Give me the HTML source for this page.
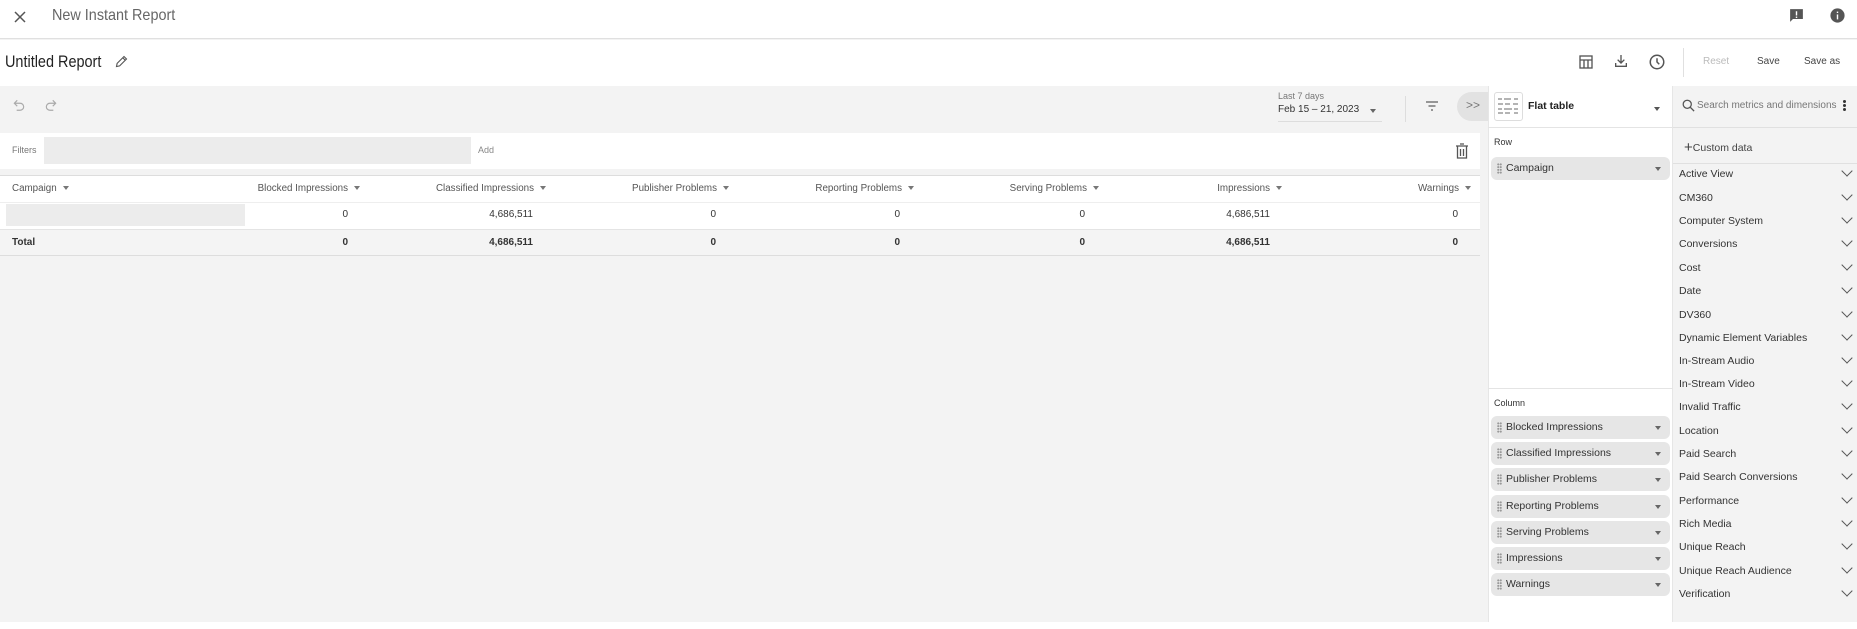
<!DOCTYPE html>
<html><head><meta charset="utf-8"><style>
*{box-sizing:border-box;margin:0;padding:0}
body{width:1857px;height:629px;overflow:hidden;font-family:"Liberation Sans",sans-serif;background:#f3f3f3;color:#222;position:relative}
.a{position:absolute}
.t{position:absolute;white-space:nowrap}
.chip{position:absolute;left:1491px;width:179px;height:23px;background:#e6e6e6;border-radius:6px;font-size:10.5px;color:#333}
.chip .d{position:absolute;left:6px;top:6px;width:5px;height:11px;background:radial-gradient(circle,#999 0.9px,transparent 1.2px) 0 0/2.5px 2.75px}
.chip span{position:absolute;left:15px;top:5px}
.chip i{position:absolute;right:9px;top:10px;border:3.5px solid transparent;border-top:4px solid #666}
.li{position:absolute;left:1679px;font-size:10.5px;color:#333}
.cv{position:absolute;left:1843px;width:8px;height:8px;border-right:1.3px solid #555;border-bottom:1.3px solid #555;transform:rotate(45deg)}
.hd{position:absolute;top:183px;font-size:9.8px;color:#555;text-align:right;white-space:nowrap}
.hd i{display:inline-block;margin-left:6px;vertical-align:middle;border:3.5px solid transparent;border-top:4px solid #777;margin-top:3px}
.v{position:absolute;font-size:10px;color:#333;text-align:right;white-space:nowrap}
</style></head><body>
<div class="a" style="left:0;top:0;width:1857px;height:39px;background:#fff;border-bottom:1px solid #e0e0e0"></div>
<svg class="a" style="left:12px;top:9px" width="16" height="16" viewBox="0 0 16 16"><path d="M3 3L13 13M13 3L3 13" stroke="#555" stroke-width="1.5"/></svg>
<div class="t" style="left:52px;top:7px;font-size:16px;color:#666;transform:scaleX(0.9);transform-origin:left">New Instant Report</div>
<svg class="a" style="left:1788px;top:7px" width="17" height="17" viewBox="0 0 24 24"><path d="M3 3h18v14H7l-4 4z" fill="#555"/><rect x="11" y="6" width="2" height="6" fill="#fff"/><rect x="11" y="13.5" width="2" height="2" fill="#fff"/></svg>
<svg class="a" style="left:1829px;top:7px" width="17" height="17" viewBox="0 0 24 24"><circle cx="12" cy="12" r="10" fill="#555"/><rect x="11" y="10.5" width="2" height="7" fill="#fff"/><rect x="11" y="6.5" width="2" height="2" fill="#fff"/></svg>
<div class="a" style="left:0;top:40px;width:1857px;height:46px;background:#fff"></div>
<div class="t" style="left:5px;top:52px;font-size:17px;color:#222;transform:scaleX(0.85);transform-origin:left">Untitled Report</div>
<svg class="a" style="left:114px;top:54px" width="15" height="15" viewBox="0 0 24 24"><path d="M4 20l1-5L16 4l4 4L9 19zM14 6l4 4" fill="none" stroke="#555" stroke-width="1.8"/></svg>
<svg class="a" style="left:1578px;top:54px" width="16" height="16" viewBox="0 0 24 24"><rect x="3" y="3" width="18" height="18" fill="none" stroke="#555" stroke-width="2"/><path d="M3 9h18M9 9v12M15 9v12" stroke="#555" stroke-width="2"/></svg>
<svg class="a" style="left:1613px;top:53px" width="16" height="16" viewBox="0 0 24 24"><path d="M12 3v12M7 10l5 5 5-5M4 15v5h16v-5" fill="none" stroke="#555" stroke-width="2"/></svg>
<svg class="a" style="left:1648px;top:53px" width="18" height="18" viewBox="0 0 24 24"><circle cx="12" cy="12" r="9" fill="none" stroke="#555" stroke-width="2"/><path d="M12 7v5l3 3" fill="none" stroke="#555" stroke-width="2"/></svg>
<div class="a" style="left:1683px;top:48px;width:1px;height:29px;background:#e0e0e0"></div>
<div class="t" style="left:1703px;top:56px;font-size:10px;color:#bbb">Reset</div>
<div class="t" style="left:1757px;top:56px;font-size:10px;color:#444">Save</div>
<div class="t" style="left:1804px;top:56px;font-size:10px;color:#444">Save as</div>
<svg class="a" style="left:12px;top:98px" width="14" height="14" viewBox="0 0 24 24"><path d="M9 4L4 9l5 5M4 9h10a6 6 0 010 12H8" fill="none" stroke="#aaa" stroke-width="2"/></svg>
<svg class="a" style="left:44px;top:98px" width="14" height="14" viewBox="0 0 24 24"><path d="M15 4l5 5-5 5M20 9H10a6 6 0 000 12h6" fill="none" stroke="#aaa" stroke-width="2"/></svg>
<div class="t" style="left:1278px;top:91px;font-size:9px;color:#777">Last 7 days</div>
<div class="t" style="left:1278px;top:104px;font-size:10px;color:#333">Feb 15 – 21, 2023</div>
<div class="a" style="left:1370px;top:109px;border:3.5px solid transparent;border-top:4px solid #666"></div>
<div class="a" style="left:1278px;top:121px;width:104px;height:1px;background:#ddd"></div>
<div class="a" style="left:1405px;top:96px;width:1px;height:26px;background:#ddd"></div>
<svg class="a" style="left:1424px;top:100px" width="16" height="12" viewBox="0 0 16 12"><path d="M2 2h12M4.5 6h7M7 10h2" stroke="#777" stroke-width="1.4"/></svg>
<div class="a" style="left:1457px;top:92px;width:35px;height:29px;background:#e2e2e2;border-radius:15px 0 0 15px"></div>
<div class="t" style="left:1466px;top:98px;font-size:12px;color:#777">&gt;&gt;</div>
<div class="a" style="left:0;top:133px;width:1480px;height:36px;background:#fff"></div>
<div class="t" style="left:12px;top:145px;font-size:9px;color:#777">Filters</div>
<div class="a" style="left:44px;top:137px;width:427px;height:27px;background:#ececec"></div>
<div class="t" style="left:478px;top:145px;font-size:9px;color:#888">Add</div>
<svg class="a" style="left:1455px;top:143px" width="14" height="16" viewBox="0 0 14 16"><path d="M1 3h12M5 1h4M2.5 3v12h9V3M5.5 6v7M8.5 6v7" fill="none" stroke="#555" stroke-width="1.3"/></svg>
<div class="a" style="left:0;top:175px;width:1480px;height:81px;background:#fff;border-top:1px solid #ddd;border-bottom:1px solid #ddd"></div>
<div class="a" style="left:0;top:202px;width:1480px;height:1px;background:#eee"></div>
<div class="a" style="left:0;top:229px;width:1480px;height:27px;background:#f4f4f4;border-top:1px solid #e4e4e4;border-bottom:1px solid #ddd"></div>
<div class="a" style="left:6px;top:204px;width:239px;height:22px;background:#ececec"></div>
<div class="hd" style="left:12px;text-align:left">Campaign<i></i></div>
<div class="hd" style="right:1497px">Blocked Impressions<i></i></div>
<div class="hd" style="right:1311px">Classified Impressions<i></i></div>
<div class="hd" style="right:1128px">Publisher Problems<i></i></div>
<div class="hd" style="right:943px">Reporting Problems<i></i></div>
<div class="hd" style="right:758px">Serving Problems<i></i></div>
<div class="hd" style="right:575px">Impressions<i></i></div>
<div class="hd" style="right:386px">Warnings<i></i></div>
<div class="v" style="right:1509px;top:209px">0</div><div class="v" style="right:1324px;top:209px">4,686,511</div><div class="v" style="right:1141px;top:209px">0</div><div class="v" style="right:957px;top:209px">0</div><div class="v" style="right:772px;top:209px">0</div><div class="v" style="right:587px;top:209px">4,686,511</div><div class="v" style="right:399px;top:209px">0</div>
<div class="t" style="left:12px;top:237px;font-size:10px;color:#333;font-weight:bold">Total</div>
<div class="v" style="right:1509px;top:237px;font-weight:bold">0</div><div class="v" style="right:1324px;top:237px;font-weight:bold">4,686,511</div><div class="v" style="right:1141px;top:237px;font-weight:bold">0</div><div class="v" style="right:957px;top:237px;font-weight:bold">0</div><div class="v" style="right:772px;top:237px;font-weight:bold">0</div><div class="v" style="right:587px;top:237px;font-weight:bold">4,686,511</div><div class="v" style="right:399px;top:237px;font-weight:bold">0</div>
<div class="a" style="left:1488px;top:86px;width:185px;height:543px;background:#fff;border-left:1px solid #e6e6e6;border-right:1px solid #e6e6e6"></div>
<div class="a" style="left:1488px;top:127px;width:185px;height:1px;background:#e4e4e4"></div>
<div class="a" style="left:1494px;top:92px;width:29px;height:29px;border:1px solid #ddd;border-radius:3px;background:#fff"></div>
<svg class="a" style="left:1497px;top:97px" width="23" height="18" viewBox="0 0 23 18"><path d="M1 2h4M7 2h7M17 2h4M1 7h5M8 7h5M16 7h5M1 12h4M7 12h8M17 12h4M1 16h5M8 16h5M17 16h4" stroke="#888" stroke-width="1.2"/></svg>
<div class="t" style="left:1528px;top:100px;font-size:10.5px;font-weight:bold;color:#222">Flat table</div>
<div class="a" style="left:1654px;top:107px;border:3.5px solid transparent;border-top:4px solid #555"></div>
<div class="t" style="left:1494px;top:137px;font-size:9px;color:#333">Row</div>
<div class="chip" style="top:157px"><div class="d"></div><span>Campaign</span><i></i></div>
<div class="a" style="left:1488px;top:388px;width:185px;height:1px;background:#e4e4e4"></div>
<div class="t" style="left:1494px;top:398px;font-size:9px;color:#333">Column</div>
<div class="chip" style="top:416px"><div class="d"></div><span>Blocked Impressions</span><i></i></div>
<div class="chip" style="top:442px"><div class="d"></div><span>Classified Impressions</span><i></i></div>
<div class="chip" style="top:468px"><div class="d"></div><span>Publisher Problems</span><i></i></div>
<div class="chip" style="top:495px"><div class="d"></div><span>Reporting Problems</span><i></i></div>
<div class="chip" style="top:521px"><div class="d"></div><span>Serving Problems</span><i></i></div>
<div class="chip" style="top:547px"><div class="d"></div><span>Impressions</span><i></i></div>
<div class="chip" style="top:573px"><div class="d"></div><span>Warnings</span><i></i></div>
<div class="a" style="left:1673px;top:127px;width:184px;height:1px;background:#e0e0e0"></div>
<svg class="a" style="left:1681px;top:98px" width="15" height="15" viewBox="0 0 24 24"><circle cx="10" cy="10" r="6.5" fill="none" stroke="#555" stroke-width="2"/><path d="M15 15l6 6" stroke="#555" stroke-width="2"/></svg>
<div class="t" style="left:1697px;top:100px;font-size:10px;color:#777">Search metrics and dimensions</div>
<div class="a" style="left:1843px;top:100px;width:3px;height:3px;background:#333;border-radius:50%;box-shadow:0 4px 0 #333,0 8px 0 #333"></div>
<div class="t" style="left:1684px;top:138px;font-size:10.5px;color:#444"><span style="font-size:15px;position:relative;top:1px">+</span>Custom data</div>
<div class="a" style="left:1673px;top:163px;width:184px;height:1px;background:#e0e0e0"></div>
<div class="li" style="top:168px">Active View</div><div class="cv" style="top:167px"></div>
<div class="li" style="top:192px">CM360</div><div class="cv" style="top:191px"></div>
<div class="li" style="top:215px">Computer System</div><div class="cv" style="top:214px"></div>
<div class="li" style="top:238px">Conversions</div><div class="cv" style="top:237px"></div>
<div class="li" style="top:262px">Cost</div><div class="cv" style="top:261px"></div>
<div class="li" style="top:285px">Date</div><div class="cv" style="top:284px"></div>
<div class="li" style="top:309px">DV360</div><div class="cv" style="top:308px"></div>
<div class="li" style="top:332px">Dynamic Element Variables</div><div class="cv" style="top:331px"></div>
<div class="li" style="top:355px">In-Stream Audio</div><div class="cv" style="top:354px"></div>
<div class="li" style="top:378px">In-Stream Video</div><div class="cv" style="top:377px"></div>
<div class="li" style="top:401px">Invalid Traffic</div><div class="cv" style="top:400px"></div>
<div class="li" style="top:425px">Location</div><div class="cv" style="top:424px"></div>
<div class="li" style="top:448px">Paid Search</div><div class="cv" style="top:447px"></div>
<div class="li" style="top:471px">Paid Search Conversions</div><div class="cv" style="top:470px"></div>
<div class="li" style="top:495px">Performance</div><div class="cv" style="top:494px"></div>
<div class="li" style="top:518px">Rich Media</div><div class="cv" style="top:517px"></div>
<div class="li" style="top:541px">Unique Reach</div><div class="cv" style="top:540px"></div>
<div class="li" style="top:565px">Unique Reach Audience</div><div class="cv" style="top:564px"></div>
<div class="li" style="top:588px">Verification</div><div class="cv" style="top:587px"></div>
<div class="a" style="left:0;top:622px;width:1857px;height:7px;background:#fff"></div>
</body></html>
